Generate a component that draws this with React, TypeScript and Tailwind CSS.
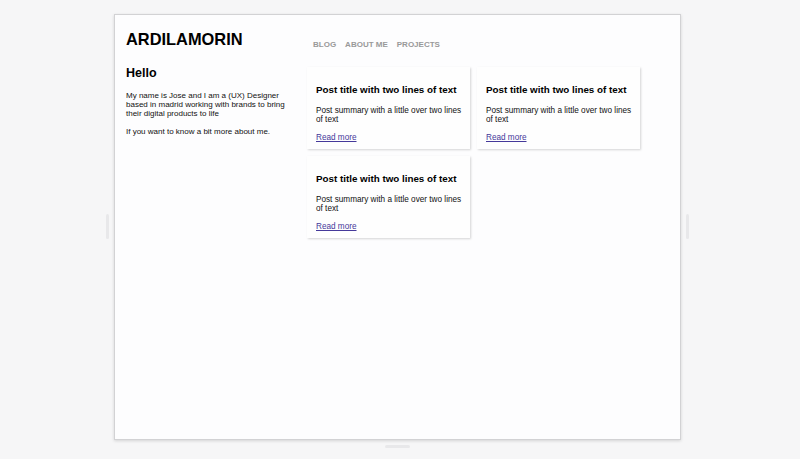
import React from 'react';

const posts = [1, 2, 3];

const PostCard: React.FC = () => (
  <div className="w-[163px] h-[82px] bg-[#fefefe] shadow-[1px_1px_2px_rgba(0,0,0,0.16)] pl-[9px] pr-[4px] pt-[17px]">
    <h3 className="text-[9.8px] leading-[12px] font-bold text-black">Post title with two lines of text</h3>
    <p className="mt-[10px] text-[8.2px] leading-[9px] text-[#111]">Post summary with a little over two lines of text</p>
    <a href="#" className="block mt-[8.5px] text-[8.2px] leading-[9px] text-[#45399a] underline">
      Read more
    </a>
  </div>
);

export default function App() {
  return (
    <div
      className="relative w-[800px] h-[459px] overflow-hidden bg-[#f6f6f7] pt-[14px] pl-[114px]"
      style={{ fontFamily: '"Liberation Sans", Arial, sans-serif' }}
    >
      {/* artboard */}
      <div className="w-[567px] h-[426px] bg-[#fdfdfe] border border-[#d2d2d4] shadow-[0_1px_3px_rgba(0,0,0,0.14)] pt-[15px] pl-[11px]">
        <header className="flex items-start">
          <h1 className="w-[181px] text-[16.4px] leading-[19px] font-bold text-black">ARDILAMORIN</h1>
          <nav className="flex gap-[9px] pl-[6px] mt-[10px] text-[8px] leading-[10px] font-bold text-[#999]">
            <span>BLOG</span>
            <span>ABOUT ME</span>
            <span>PROJECTS</span>
          </nav>
        </header>

        <div className="flex items-start mt-[16px]">
          <div className="w-[170px]">
            <h2 className="text-[12.5px] leading-[14px] font-bold text-black">Hello</h2>
            <p className="mt-[10.5px] text-[8px] leading-[9px] text-[#111]">
              My name is Jose and I am a (UX) Designer based in madrid working with brands to bring their digital
              products to life
            </p>
            <p className="mt-[9px] text-[8px] leading-[9px] text-[#111]">If you want to know a bit more about me.</p>
          </div>

          <div className="ml-[11px] mt-[1px] grid grid-cols-[163px_163px] gap-[7px]">
            {posts.map((p) => (
              <PostCard key={p} />
            ))}
          </div>
        </div>
      </div>

      {/* resize handles */}
      <div className="absolute left-[106px] top-[214px] w-[3px] h-[25px] rounded-sm bg-[#e8e8ea]" />
      <div className="absolute left-[686px] top-[214px] w-[3px] h-[25px] rounded-sm bg-[#e8e8ea]" />
      <div className="absolute left-[385px] top-[445px] w-[25px] h-[3px] rounded-sm bg-[#e8e8ea]" />
    </div>
  );
}
